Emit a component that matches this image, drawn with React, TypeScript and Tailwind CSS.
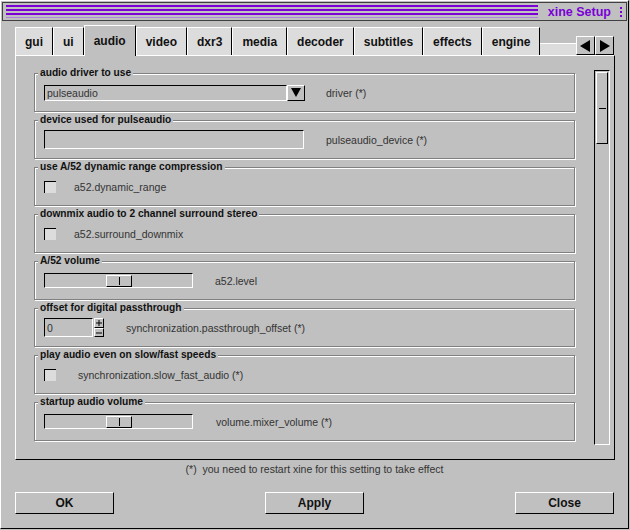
import React from "react";

const TABS = ["gui", "ui", "audio", "video", "dxr3", "media", "decoder", "subtitles", "effects", "engine"];

function Group({ title, children }: { title: string; children: React.ReactNode }) {
  return (
    <div className="relative h-[39px] w-[541px] border border-[#808080] shadow-[1px_1px_0_#fff,inset_1px_1px_0_#fff] flex items-center pl-[9px]">
      <span className="absolute left-[3px] -top-[7px] bg-[#c0c0c0] px-[2px] text-[10.2px] font-bold leading-[12px] text-[#111]">
        {title}
      </span>
      {children}
    </div>
  );
}

function Label({ children, ml }: { children: React.ReactNode; ml: string }) {
  return <span className={`text-[10.5px] leading-[12px] text-[#333] ${ml}`}>{children}</span>;
}

function Check() {
  return <div className="w-[12px] h-[12px] bg-[#dcdcdc] border-t border-l border-black" />;
}

function Slider() {
  return (
    <div className="w-[149px] h-[15px] border-t border-l border-black border-b border-r border-b-white border-r-white flex items-center pl-[61px]">
      <div className="w-[26px] h-[12px] border-t border-l border-white border-b border-r border-b-black border-r-black flex justify-center items-center">
        <div className="w-px h-[8px] bg-black" />
      </div>
    </div>
  );
}

export default function App() {
  return (
    <div className="w-[630px] h-[530px] bg-[#c0c0c0] font-['Liberation_Sans',Arial,sans-serif] overflow-hidden">
      <div className="w-[629px] h-[529px] border-l border-t border-white border-r border-b border-r-black border-b-black flex flex-col">
        {/* title bar */}
        <div className="mx-[1px] mt-[1px] h-[19px] border border-[#404040] flex items-center pl-[3px] pr-[4px]">
          <div className="flex-1 flex flex-col gap-[2px]">
            <div className="h-[2px] bg-[#7a00d6]" />
            <div className="h-[2px] bg-[#7a00d6]" />
            <div className="h-[2px] bg-[#7a00d6]" />
            <div className="h-[1px] bg-[#b080e0]" />
          </div>
          <span className="ml-[10px] text-[12.5px] font-bold text-[#7a00d6] leading-[14px]">xine Setup</span>
          <div className="ml-[9px] flex flex-col gap-[2px]">
            <div className="w-[2px] h-[2px] bg-[#7a00d6]" />
            <div className="w-[2px] h-[2px] bg-[#7a00d6]" />
            <div className="w-[2px] h-[2px] bg-[#7a00d6]" />
          </div>
        </div>

        {/* tabs */}
        <div className="ml-[14px] mt-[3px] w-[599px] flex items-end h-[31px]">
          {TABS.map((t) =>
            t === "audio" ? (
              <div
                key={t}
                className="relative z-10 -mb-px h-[31px] px-[9px] bg-[#c0c0c0] border-t border-l border-white border-r border-r-black flex items-center text-[12px] font-bold text-[#111]"
              >
                {t}
              </div>
            ) : (
              <div
                key={t}
                className="h-[28px] px-[9px] bg-[#dcdcdc] border-t border-l border-white border-r border-r-black flex items-center text-[12px] font-bold text-[#111]"
              >
                {t}
              </div>
            )
          )}
          <div className="flex-1 h-[12px] bg-[#dcdcdc] border-t border-white" />
          <div className="w-[19px] h-[19px] border-t border-l border-white border-b border-r border-b-black border-r-black flex items-center justify-center">
            <svg width="11" height="12" viewBox="0 0 11 12">
              <polygon points="10,0 10,12 0,6" fill="#000" />
            </svg>
          </div>
          <div className="w-[19px] h-[19px] border-t border-l border-white border-b border-r border-b-black border-r-black flex items-center justify-center">
            <svg width="11" height="12" viewBox="0 0 11 12">
              <polygon points="1,0 1,12 11,6" fill="#000" />
            </svg>
          </div>
        </div>

        {/* panel */}
        <div className="ml-[14px] w-[600px] h-[405px] border-t border-l border-white border-r border-b border-r-black border-b-black flex">
          <div className="ml-[18px] mt-[17px] flex flex-col gap-[8px]">
            <Group title="audio driver to use">
              <div className="w-[243px] h-[16px] border-t border-l border-black border-b border-r border-b-white border-r-white flex items-center pl-[2px]">
                <span className="text-[10.5px] leading-[12px] text-[#333]">pulseaudio</span>
              </div>
              <div className="w-[18px] h-[16px] border-t border-l border-white border-b border-r border-b-black border-r-black flex items-center justify-center">
                <svg width="10" height="9" viewBox="0 0 10 9">
                  <polygon points="0,0 10,0 5,9" fill="#000" />
                </svg>
              </div>
              <Label ml="ml-[21px]">driver (*)</Label>
            </Group>
            <Group title="device used for pulseaudio">
              <div className="w-[260px] h-[19px] border-t border-l border-black border-b border-r border-b-white border-r-white" />
              <Label ml="ml-[22px]">pulseaudio_device (*)</Label>
            </Group>
            <Group title="use A/52 dynamic range compression">
              <Check />
              <Label ml="ml-[18px]">a52.dynamic_range</Label>
            </Group>
            <Group title="downmix audio to 2 channel surround stereo">
              <Check />
              <Label ml="ml-[18px]">a52.surround_downmix</Label>
            </Group>
            <Group title="A/52 volume">
              <Slider />
              <Label ml="ml-[22px]">a52.level</Label>
            </Group>
            <Group title="offset for digital passthrough">
              <div className="w-[49px] h-[19px] border-t border-l border-black border-b border-r border-b-white border-r-white flex items-center pl-[2px]">
                <span className="text-[10.5px] leading-[12px] text-[#333]">0</span>
              </div>
              <div className="ml-px flex flex-col">
                <div className="w-[10px] h-[10px] border-t border-l border-white border-b border-r border-b-black border-r-black flex items-center justify-center">
                  <svg width="6" height="6" viewBox="0 0 6 6">
                    <rect x="0" y="2.5" width="6" height="1" fill="#000" />
                    <rect x="2.5" y="0" width="1" height="6" fill="#000" />
                  </svg>
                </div>
                <div className="w-[10px] h-[9px] border-t border-l border-white border-b border-r border-b-black border-r-black flex items-center justify-center">
                  <svg width="6" height="2" viewBox="0 0 6 2">
                    <rect x="0" y="0.5" width="6" height="1" fill="#000" />
                  </svg>
                </div>
              </div>
              <Label ml="ml-[22px]">synchronization.passthrough_offset (*)</Label>
            </Group>
            <Group title="play audio even on slow/fast speeds">
              <Check />
              <Label ml="ml-[22px]">synchronization.slow_fast_audio (*)</Label>
            </Group>
            <Group title="startup audio volume">
              <Slider />
              <Label ml="ml-[23px]">volume.mixer_volume (*)</Label>
            </Group>
          </div>

          {/* scrollbar */}
          <div className="ml-[19px] mt-[14px] w-[16px] h-[375px] border-t border-l border-black border-b border-r border-b-white border-r-white pl-px pt-px">
            <div className="w-[12px] h-[72px] border-t border-l border-white border-b border-r border-b-black border-r-black flex items-center justify-center">
              <div className="w-[7px] h-px bg-black" />
            </div>
          </div>
        </div>

        {/* footer note */}
        <div className="mt-[3px] text-center text-[10.5px] leading-[12px] text-[#333]">
          (*)&nbsp; you need to restart xine for this setting to take effect
        </div>

        {/* buttons */}
        <div className="mt-[17px] ml-[14px] w-[599px] flex justify-between">
          {["OK", "Apply", "Close"].map((b) => (
            <div
              key={b}
              className="w-[99px] h-[22px] border-t border-l border-white border-b border-r border-b-black border-r-black flex items-center justify-center text-[12px] font-bold text-[#111]"
            >
              {b}
            </div>
          ))}
        </div>
      </div>
    </div>
  );
}
